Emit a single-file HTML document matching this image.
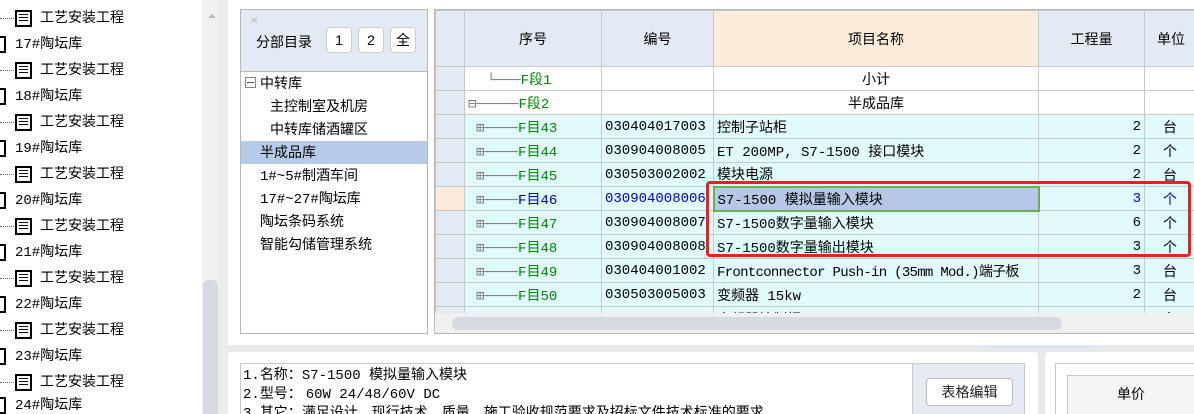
<!DOCTYPE html>
<html><head><meta charset="utf-8"><style>
*{box-sizing:border-box;margin:0;padding:0}
html,body{width:1194px;height:414px;overflow:hidden}
body{background:#e9e9e9;font-family:"Liberation Sans","Noto Sans CJK SC",sans-serif;font-size:14px;color:#000;position:relative}
.abs{position:absolute}
.lt{left:0;top:0;width:202px;height:414px;background:#fff;overflow:hidden}
.li{position:absolute;height:25px;line-height:25px;font-size:14px;white-space:nowrap}
.ico{display:inline-block;width:17px;height:17px;border:2px solid #000;vertical-align:middle;margin-right:8px;position:relative;background:#fff}
.ico:after{content:"";position:absolute;left:2px;right:2px;top:2px;height:9px;background:repeating-linear-gradient(#000 0 1px,#fff 1px 3px)}
.ico2{display:inline-block;width:6px;height:17px;border:2px solid #000;border-left:none;vertical-align:middle;margin-right:9px}
.dots{display:inline-block;width:14px;border-top:1px dotted #666;vertical-align:middle;margin-right:1px}
.mono{font-family:"Liberation Mono","Noto Sans CJK SC",monospace}
table{border-collapse:collapse;table-layout:fixed}
td{border:1px solid #c8c8c8;height:24px;font-size:14px;white-space:nowrap;overflow:hidden;padding:0 3px}
.tr{color:#777}
.g{color:#080}
</style></head><body>
<div class="abs lt">
<div class="li" style="top:5px;left:0"><span class="dots"></span><span class="ico"></span>工艺安装工程</div>
<div class="li" style="top:31px;left:0"><span class="ico2"></span><span class="mono">17#</span>陶坛库</div>
<div class="li" style="top:57px;left:0"><span class="dots"></span><span class="ico"></span>工艺安装工程</div>
<div class="li" style="top:83px;left:0"><span class="ico2"></span><span class="mono">18#</span>陶坛库</div>
<div class="li" style="top:109px;left:0"><span class="dots"></span><span class="ico"></span>工艺安装工程</div>
<div class="li" style="top:135px;left:0"><span class="ico2"></span><span class="mono">19#</span>陶坛库</div>
<div class="li" style="top:161px;left:0"><span class="dots"></span><span class="ico"></span>工艺安装工程</div>
<div class="li" style="top:187px;left:0"><span class="ico2"></span><span class="mono">20#</span>陶坛库</div>
<div class="li" style="top:213px;left:0"><span class="dots"></span><span class="ico"></span>工艺安装工程</div>
<div class="li" style="top:239px;left:0"><span class="ico2"></span><span class="mono">21#</span>陶坛库</div>
<div class="li" style="top:265px;left:0"><span class="dots"></span><span class="ico"></span>工艺安装工程</div>
<div class="li" style="top:291px;left:0"><span class="ico2"></span><span class="mono">22#</span>陶坛库</div>
<div class="li" style="top:317px;left:0"><span class="dots"></span><span class="ico"></span>工艺安装工程</div>
<div class="li" style="top:343px;left:0"><span class="ico2"></span><span class="mono">23#</span>陶坛库</div>
<div class="li" style="top:369px;left:0"><span class="dots"></span><span class="ico"></span>工艺安装工程</div>
<div class="li" style="top:392px;left:0"><span class="ico2"></span><span class="mono">24#</span>陶坛库</div>
</div>
<div class="abs" style="left:202px;top:0;width:17px;height:414px;background:#f0f0f0"></div>
<div class="abs" style="left:203px;top:280px;width:15px;height:134px;background:#d6d9df;border-radius:6px 6px 0 0"></div>
<div class="abs" style="left:208px;top:14px;border:4px solid transparent;border-bottom-color:#bbb;border-top:none"></div>
<div class="abs" style="left:219px;top:0;width:9px;height:414px;background:#ececec"></div>
<div class="abs" style="left:228px;top:0;width:966px;height:345px;background:#fff"></div>
<div class="abs" style="left:240px;top:9px;width:188px;height:325px;border:1px solid #b8b8b8;background:#fff">
<div style="height:62px;background:#e4eaf3;border-bottom:1px solid #b8b8b8;position:relative">
<div class="abs" style="left:9px;top:2px;color:#bbb;font-size:14px">×</div>
<div class="abs" style="left:15px;top:22px;font-size:14px">分部目录</div>
<div class="abs" style="left:85px;top:17px;width:26px;height:26px;border:1px solid #ccc;border-radius:4px;background:#fff;text-align:center;line-height:24px">1</div>
<div class="abs" style="left:117px;top:17px;width:26px;height:26px;border:1px solid #ccc;border-radius:4px;background:#fff;text-align:center;line-height:24px">2</div>
<div class="abs" style="left:149px;top:17px;width:26px;height:26px;border:1px solid #ccc;border-radius:4px;background:#fff;text-align:center;line-height:24px">全</div>
</div>
<div style="position:relative;font-size:14px">
<div class="abs" style="left:4px;top:5px;width:11px;height:11px;border:1px solid #888"><div style="margin:4px 1px;height:1px;background:#555"></div></div>
<div class="abs" style="left:19px;top:1px">中转库</div>
<div class="abs" style="left:29px;top:24px">主控制室及机房</div>
<div class="abs" style="left:29px;top:47px">中转库储酒罐区</div>
<div class="abs" style="left:0;top:69px;width:186px;height:23px;background:#b6cbe8"></div>
<div class="abs" style="left:19px;top:70px">半成品库</div>
<div class="abs" style="left:19px;top:93px"><span class="mono">1#~5#</span>制酒车间</div>
<div class="abs" style="left:19px;top:116px"><span class="mono">17#~27#</span>陶坛库</div>
<div class="abs" style="left:19px;top:139px">陶坛条码系统</div>
<div class="abs" style="left:19px;top:162px">智能勾储管理系统</div>
</div>
</div>
<div class="abs" style="left:434px;top:9px;width:760px;height:325px;border:1px solid #b8b8b8;border-right:none;overflow:hidden;background:#fff">
<table style="width:801px" class="mono">
<colgroup><col style="width:29px"><col style="width:137px"><col style="width:112px"><col style="width:325px"><col style="width:106px"><col style="width:92px"></colgroup>
<tr style="background:#e4eaf3;font-family:'Liberation Sans','Noto Sans CJK SC',sans-serif"><td style="height:56px"></td><td style="text-align:center">序号</td><td style="text-align:center">编号</td><td style="text-align:center;background:#fdebdc">项目名称</td><td style="text-align:center">工程量</td><td style="text-align:left;padding-left:12px;border-left:1px solid #2a9a6a">单位</td></tr>
<tr><td style="background:#e4eaf3"></td><td style="padding-left:22px"><span class="tr">└───</span><span class="g">F段1</span></td><td></td><td style="text-align:center">小计</td><td></td><td style="border-left:1px solid #2a9a6a"></td></tr>
<tr><td style="background:#e4eaf3"></td><td style="padding-left:3px"><span class="tr">⊟─────</span><span class="g">F段2</span></td><td></td><td style="text-align:center">半成品库</td><td></td><td style="border-left:1px solid #2a9a6a"></td></tr>
<tr style="background:#e1fbfc"><td style="background:#e4eaf3"></td><td style="padding-left:11px"><span class="tr">⊞────</span><span class="g">F目43</span></td><td>030404017003</td><td>控制子站柜</td><td style="text-align:right">2</td><td style="padding-left:18px;border-left:1px solid #2a9a6a">台</td></tr>
<tr style="background:#e1fbfc"><td style="background:#e4eaf3"></td><td style="padding-left:11px"><span class="tr">⊞────</span><span class="g">F目44</span></td><td>030904008005</td><td>ET 200MP, S7-1500 接口模块</td><td style="text-align:right">2</td><td style="padding-left:18px;border-left:1px solid #2a9a6a">个</td></tr>
<tr style="background:#e1fbfc"><td style="background:#e4eaf3"></td><td style="padding-left:11px"><span class="tr">⊞────</span><span class="g">F目45</span></td><td>030503002002</td><td>模块电源</td><td style="text-align:right">2</td><td style="padding-left:18px;border-left:1px solid #2a9a6a">台</td></tr>
<tr style="background:#e1fbfc;color:#00c"><td style="background:#fdebdc"></td><td style="padding-left:11px"><span class="tr">⊞────</span>F目46</td><td>030904008006</td><td style="background:#b6c8e6;border:2px solid #6ab04c;color:#000">S7-1500 模拟量输入模块</td><td style="text-align:right">3</td><td style="padding-left:18px;border-left:1px solid #2a9a6a">个</td></tr>
<tr style="background:#e1fbfc"><td style="background:#e4eaf3"></td><td style="padding-left:11px"><span class="tr">⊞────</span><span class="g">F目47</span></td><td>030904008007</td><td>S7-1500数字量输入模块</td><td style="text-align:right">6</td><td style="padding-left:18px;border-left:1px solid #2a9a6a">个</td></tr>
<tr style="background:#e1fbfc"><td style="background:#e4eaf3"></td><td style="padding-left:11px"><span class="tr">⊞────</span><span class="g">F目48</span></td><td>030904008008</td><td>S7-1500数字量输出模块</td><td style="text-align:right">3</td><td style="padding-left:18px;border-left:1px solid #2a9a6a">个</td></tr>
<tr style="background:#e1fbfc"><td style="background:#e4eaf3"></td><td style="padding-left:11px"><span class="tr">⊞────</span><span class="g">F目49</span></td><td>030404001002</td><td style="letter-spacing:-0.7px">Frontconnector Push-in (35mm Mod.)端子板</td><td style="text-align:right">3</td><td style="padding-left:18px;border-left:1px solid #2a9a6a">台</td></tr>
<tr style="background:#e1fbfc"><td style="background:#e4eaf3"></td><td style="padding-left:11px"><span class="tr">⊞────</span><span class="g">F目50</span></td><td>030503005003</td><td>变频器 15kw</td><td style="text-align:right">2</td><td style="padding-left:18px;border-left:1px solid #2a9a6a">台</td></tr>
<tr style="background:#e1fbfc"><td style="background:#e4eaf3"></td><td style="padding-left:11px"><span class="tr">⊞────</span><span class="g">F目51</span></td><td>030404004008</td><td>变频器控制柜</td><td style="text-align:right">1</td><td style="padding-left:18px;border-left:1px solid #2a9a6a">台</td></tr>
</table>
<div class="abs" style="left:0;top:303px;width:760px;height:21px;background:#f0f0f0"></div>
<div class="abs" style="left:17px;top:307px;width:610px;height:13px;background:#d6d9df;border-radius:7px"></div>
</div>
<div class="abs" style="left:706px;top:181px;width:485px;height:76px;border:3px solid #f21d1d;border-radius:4px"></div>
<div class="abs" style="left:980px;top:346px;width:120px;height:2px;background:#d4e6f8"></div>
<div class="abs" style="left:228px;top:352px;width:810px;height:62px;background:#fff;border-radius:4px 4px 0 0"></div>
<div class="abs" style="left:240px;top:363px;width:673px;height:51px;border:1px solid #c8c8c8;border-bottom:none;padding:2px 2px;font-size:14px;line-height:17px;overflow:hidden;white-space:nowrap"><span class="mono">1.</span>名称：<span class="mono">S7-1500 </span>模拟量输入模块<br><span class="mono">2.</span>型号： <span class="mono">60W 24/48/60V DC</span><br><span class="mono">3.</span>其它：满足设计、现行技术、质量、施工验收规范要求及招标文件技术标准的要求</div>
<div class="abs" style="left:913px;top:363px;width:112px;height:51px;background:#e6eaf2;border:1px solid #c8c8c8;border-left:none;border-bottom:none"></div>
<div class="abs" style="left:926px;top:378px;width:87px;height:28px;background:#fff;border:1px solid #bbb;border-radius:4px;text-align:center;line-height:26px;font-size:14px;color:#222">表格编辑</div>
<div class="abs" style="left:1045px;top:352px;width:149px;height:62px;background:#fff;border-radius:4px 0 0 0"></div>
<div class="abs" style="left:1055px;top:363px;width:139px;height:51px;border:1px solid #c8c8c8;border-right:none;border-bottom:none"></div>
<div class="abs" style="left:1067px;top:375px;width:127px;height:39px;background:#f4f5f7;border:1px solid #c8c8c8;border-right:none;border-bottom:none;text-align:center;line-height:36px;font-size:14px">单价</div>
</body></html>
